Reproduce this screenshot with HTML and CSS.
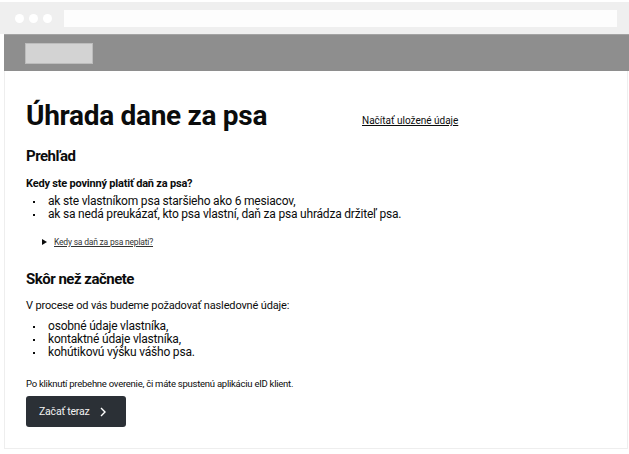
FILE: index.html
```html
<!DOCTYPE html>
<html lang="sk">
<head>
<meta charset="utf-8">
<title>Úhrada dane za psa</title>
<link rel="stylesheet" href="styles.css">
</head>
<body>
<div class="window">
  <div class="topbar">
    <span class="dot"></span><span class="dot"></span><span class="dot"></span>
    <div class="address"></div>
  </div>
  <div class="page">
    <header class="header"><div class="logo"></div></header>
    <main class="content">
      <div class="title-row">
        <h1 class="title">Úhrada dane za psa</h1>
        <a class="load-link" href="#">Načítať uložené údaje</a>
      </div>
      <h2 class="h2 h2-first">Prehľad</h2>
      <p class="question">Kedy ste povinný platiť daň za psa?</p>
      <ul class="list">
        <li>ak ste vlastníkom psa staršieho ako 6 mesiacov,</li>
        <li>ak sa nedá preukázať, kto psa vlastní, daň za psa uhrádza držiteľ psa.</li>
      </ul>
      <div class="details"><span class="tri"></span><a href="#" class="details-link">Kedy sa daň za psa neplatí?</a></div>
      <h2 class="h2 h2-second">Skôr než začnete</h2>
      <p class="text">V procese od vás budeme požadovať nasledovné údaje:</p>
      <ul class="list list2">
        <li>osobné údaje vlastníka,</li>
        <li>kontaktné údaje vlastníka,</li>
        <li>kohútikovú výšku vášho psa.</li>
      </ul>
      <p class="note">Po kliknutí prebehne overenie, či máte spustenú aplikáciu eID klient.</p>
      <button class="btn">Začať teraz <svg class="chev" width="6" height="10" viewBox="0 0 6 10"><path d="M1 1 L5 5 L1 9" fill="none" stroke="#fff" stroke-width="1.4"/></svg></button>
    </main>
  </div>
</div>
</body>
</html>
```
FILE: styles.css
```css
* { box-sizing: border-box; }
body { margin: 0; background: #fff; font-family: Roboto, "Liberation Sans", sans-serif; color: #0b0c0c; }
.window { padding-top: 2px; }
.topbar { height: 32px; background: #efefef; display: flex; align-items: center; padding: 0 12px 0 15px; }
.dot { width: 9px; height: 9px; border-radius: 50%; background: #fff; margin-right: 5px; }
.address { flex: 1; height: 17px; background: #fdfdfd; margin-left: 7px; }
.page { margin-left: 4px; }
.header { height: 37px; background: #8e8e8e; border-top: 1px solid #a3a3a3; display: flex; align-items: center; padding-left: 21px; }
.logo { width: 68px; height: 21px; background: #d3d3d3; border: 1px solid #bcbcbc; }
.content { margin-right: 1px; border: 1px solid #eeeeee; border-top: 0; padding: 28px 21px 22px 21px; height: 378px; }
.title-row { display: flex; align-items: flex-end; }
.title { margin: 0; width: 336px; font-size: 28px; line-height: 34px; font-weight: 700; letter-spacing: -0.3px; }
.load-link { font-size: 10px; color: #0b0c0c; text-decoration: underline; margin-bottom: 7px; }
.h2 { margin: 0; font-size: 15px; font-weight: 700; line-height: 18px; letter-spacing: -0.5px; }
.h2-first { margin-top: 14px; }
.question { margin: 12px 0 0; font-size: 11px; font-weight: 700; line-height: 14px; letter-spacing: -0.2px; }
.list { margin: 4px 0 0; padding: 0; list-style: none; font-size: 12px; line-height: 13px; letter-spacing: -0.2px; }
.list li { position: relative; padding-left: 22px; }
.list li::before { content: ""; position: absolute; left: 7px; top: 6px; width: 2px; height: 2px; background: #0b0c0c; }
.details { margin-top: 16px; display: flex; align-items: center; padding-left: 16px; font-size: 8.5px; }
.tri { width: 0; height: 0; border-left: 5px solid #0b0c0c; border-top: 3.5px solid transparent; border-bottom: 3.5px solid transparent; margin-right: 7px; }
.details-link { color: #333; text-decoration: underline; letter-spacing: -0.2px; }
.h2-second { margin-top: 23px; }
.text { margin: 11px 0 0; font-size: 11px; line-height: 14px; letter-spacing: -0.15px; }
.list2 { margin-top: 7px; }
.note { margin: 19px 0 0; font-size: 9.5px; line-height: 12px; letter-spacing: -0.25px; }
.btn { margin-top: 6px; width: 100px; height: 31px; background: #2b3036; color: #f2f2f2; border: 0; border-radius: 3px; font-family: inherit; font-size: 10.5px; display: flex; align-items: center; padding: 0 0 0 13px; letter-spacing: -0.2px; }
.chev { margin-left: 10px; }
```
